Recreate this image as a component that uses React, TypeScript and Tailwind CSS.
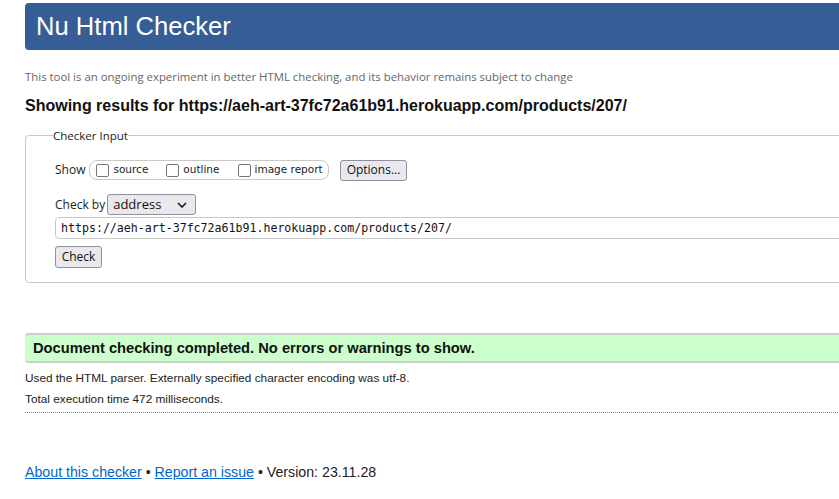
import React from "react";

const ui = { fontFamily: '"Open Sans", "Noto Sans", sans-serif' };
const arial = { fontFamily: '"Liberation Sans", Arial, sans-serif' };

function Box({ label }: { label: string }) {
  return (
    <label className="flex items-center gap-[4px]">
      <span className="inline-block w-[13px] h-[13px] border border-[#767676] rounded-[2px] bg-white" />
      <span className="text-[10.5px] text-[#222]" style={{ fontFamily: '"DejaVu Sans", sans-serif' }}>{label}</span>
    </label>
  );
}

export default function App() {
  return (
    <div className="w-[839px] h-[499px] overflow-hidden bg-white" style={arial}>
      <div className="pl-[25px] w-[900px]">
        <div className="mt-[3px] h-[47px] bg-[#365d95] rounded-[4px] flex items-center pl-[11px]">
          <h1 className="text-white text-[25.6px] leading-none" style={arial}>Nu Html Checker</h1>
        </div>
        <p className="mt-[20px] text-[11.4px] text-[#666] leading-[14px]" style={ui}>
          This tool is an ongoing experiment in better HTML checking, and its behavior remains subject to change
        </p>
        <h2 className="mt-[13px] text-[16px] font-bold text-[#111] leading-[18px]">
          Showing results for https://aeh-art-37fc72a61b91.herokuapp.com/products/207/
        </h2>
        <fieldset className="mt-[12px] border border-[#c8c8c8] rounded-[4px] pl-[29px] pb-[14px] h-[156px]" style={ui}>
          <legend className="text-[11.5px] text-[#222] px-0 ml-[-2px]">Checker Input</legend>
          <div className="flex items-center mt-[15px] h-[22px]">
            <span className="text-[12px] text-[#222] mr-[4px]">Show</span>
            <div className="flex items-center gap-[18px] border border-[#c8c8c8] rounded-[8px] h-[20px] pl-[6px] pr-[5px]">
              <Box label="source" />
              <Box label="outline" />
              <Box label="image report" />
            </div>
            <button className="ml-[11px] h-[21px] px-[6px] bg-[#e9e9ed] border border-[#8f8f9d] rounded-[3px] text-[12px] text-[#111]">
              Options...
            </button>
          </div>
          <div className="flex items-center mt-[13px] h-[21px]">
            <span className="text-[12px] text-[#222] mr-[2px]">Check by</span>
            <div className="w-[89px] h-[21px] border border-[#8f8f9d] rounded-[3px] bg-[#e9e9ed] flex items-center justify-between pl-[5px] pr-[8px]">
              <span className="text-[13px] text-[#111]">address</span>
              <svg width="10" height="6" viewBox="0 0 10 6"><path d="M1 1l4 4 4-4" fill="none" stroke="#111" strokeWidth="1.5" /></svg>
            </div>
          </div>
          <div className="mt-[2px] h-[22px] border border-[#c8c8c8] rounded-[4px] flex items-center pl-[5px] bg-white">
            <span className="text-[11.6px] text-[#111]" style={{ fontFamily: '"DejaVu Sans Mono", monospace' }}>
              https://aeh-art-37fc72a61b91.herokuapp.com/products/207/
            </span>
          </div>
          <button className="mt-[7px] h-[22px] w-[47px] bg-[#e9e9ed] border border-[#8f8f9d] rounded-[3px] text-[12px] text-[#111]">
            Check
          </button>
        </fieldset>
        <div className="mt-[50px] h-[30px] bg-[#ccffcc] border-y-2 border-[#cccccc] rounded-l-[4px] flex items-center pl-[8px]">
          <span className="text-[14.7px] font-bold text-[#111]">Document checking completed. No errors or warnings to show.</span>
        </div>
        <p className="mt-[8px] text-[11.8px] text-[#222] leading-[14px]">Used the HTML parser. Externally specified character encoding was utf-8.</p>
        <p className="mt-[7px] text-[11.8px] text-[#222] leading-[14px]">Total execution time 472 milliseconds.</p>
        <div className="mt-[6px] border-t border-dotted border-[#888]" />
        <p className="mt-[51px] text-[14.2px] text-[#222] leading-[16px]">
          <a className="text-[#0066cc] underline" href="#">About this checker</a>
          {" \u2022 "}
          <a className="text-[#0066cc] underline" href="#">Report an issue</a>
          {" \u2022 Version: 23.11.28"}
        </p>
      </div>
    </div>
  );
}
